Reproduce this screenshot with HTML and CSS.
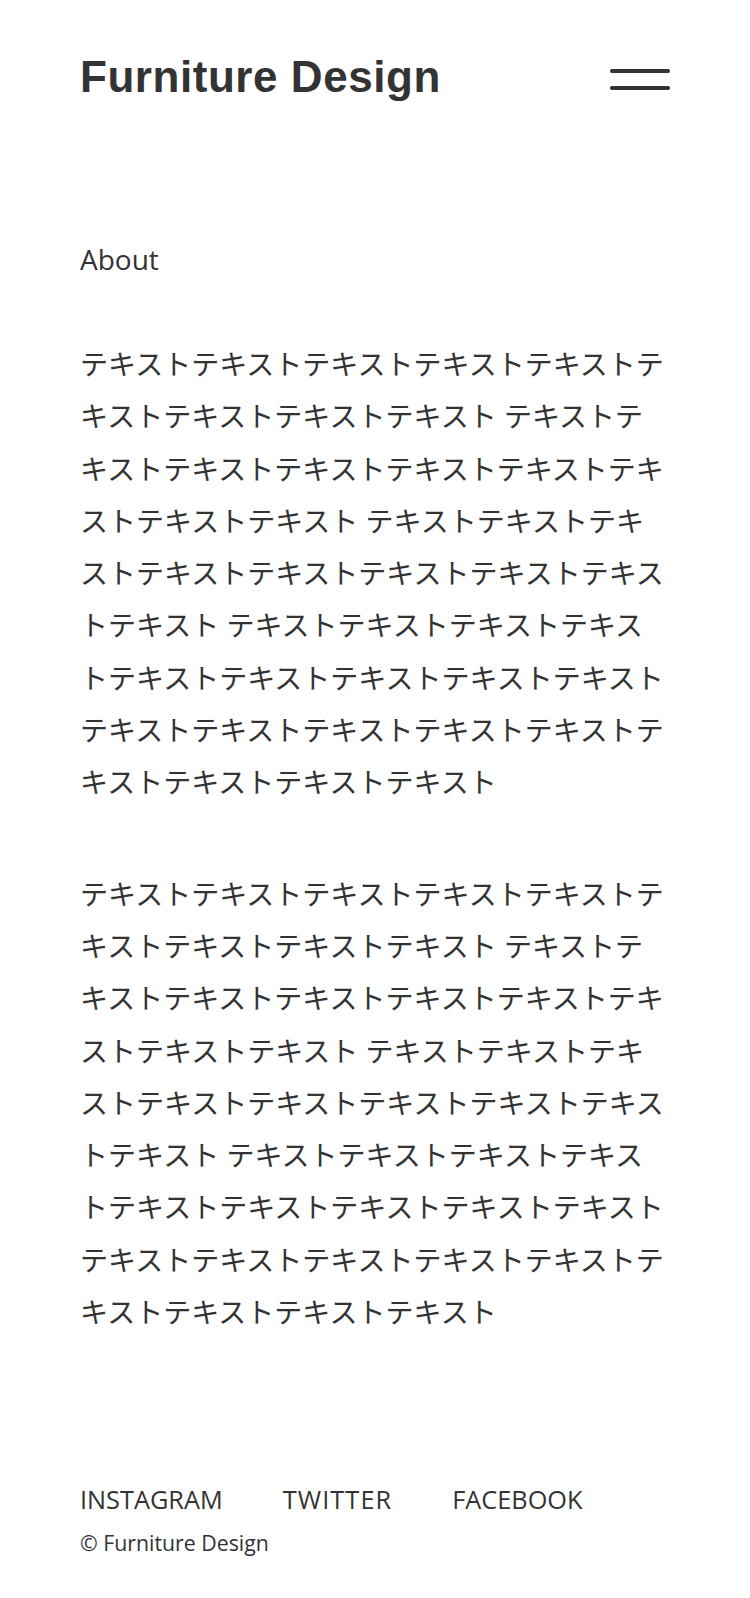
FILE: index.html
```html
<!DOCTYPE html>
<html lang="ja">
<head>
<meta charset="utf-8">
<title>Furniture Design</title>
<link rel="stylesheet" href="styles.css">
</head>
<body>
<header class="site-header">
  <h1 class="logo">Furniture Design</h1>
  <button class="menu-btn" aria-label="menu"><span class="bar"></span><span class="bar"></span></button>
</header>
<main class="content">
  <h2 class="section-title">About</h2>
  <p class="text">テキストテキストテキストテキストテキストテキストテキストテキストテキスト テキストテキストテキストテキストテキストテキストテキストテキストテキスト テキストテキストテキストテキストテキストテキストテキストテキストテキスト テキストテキストテキストテキストテキストテキストテキストテキストテキストテキストテキストテキストテキストテキストテキストテキストテキストテキスト</p>
  <p class="text">テキストテキストテキストテキストテキストテキストテキストテキストテキスト テキストテキストテキストテキストテキストテキストテキストテキストテキスト テキストテキストテキストテキストテキストテキストテキストテキストテキスト テキストテキストテキストテキストテキストテキストテキストテキストテキストテキストテキストテキストテキストテキストテキストテキストテキストテキスト</p>
</main>
<footer class="site-footer">
  <ul class="sns">
    <li>INSTAGRAM</li>
    <li class="wide">TWITTER</li>
    <li>FACEBOOK</li>
  </ul>
  <p class="copy">© Furniture Design</p>
</footer>
</body>
</html>
```
FILE: styles.css
```css
* { box-sizing: border-box; }
html, body { margin: 0; padding: 0; }
body {
  background: #fff;
  color: #333;
  font-family: "Open Sans", "Noto Sans CJK JP", sans-serif;
}
.site-header {
  display: flex;
  justify-content: space-between;
  align-items: center;
  padding: 52px 80px 0;
}
.logo {
  margin: 0;
  font-family: "Liberation Sans", Arial, sans-serif;
  font-weight: bold;
  font-size: 44px;
  letter-spacing: 0.55px;
  line-height: 50px;
}
.menu-btn {
  display: flex;
  flex-direction: column;
  gap: 13px;
  width: 60px;
  margin-top: 4px;
  padding: 0;
  border: 0;
  background: none;
}
.bar {
  display: block;
  width: 60px;
  height: 4px;
  background: #333;
  border-radius: 2px;
}
.content {
  padding: 132px 80px 0;
}
.section-title {
  margin: 0 0 54px;
  font-size: 28px;
  font-weight: normal;
  line-height: 50px;
}
.text {
  margin: 0 0 59px;
  font-size: 28px;
  line-height: 52.3px;
}
.site-footer {
  padding: 82px 80px 0;
}
.sns {
  display: flex;
  gap: 60px;
  margin: 0;
  padding: 0;
  list-style: none;
  font-size: 25.3px;
  line-height: 40px;
}
.sns .wide {
  letter-spacing: 1.1px;
}
.copy {
  margin: 9px 0 0;
  font-size: 21.3px;
  line-height: 30px;
}
```
